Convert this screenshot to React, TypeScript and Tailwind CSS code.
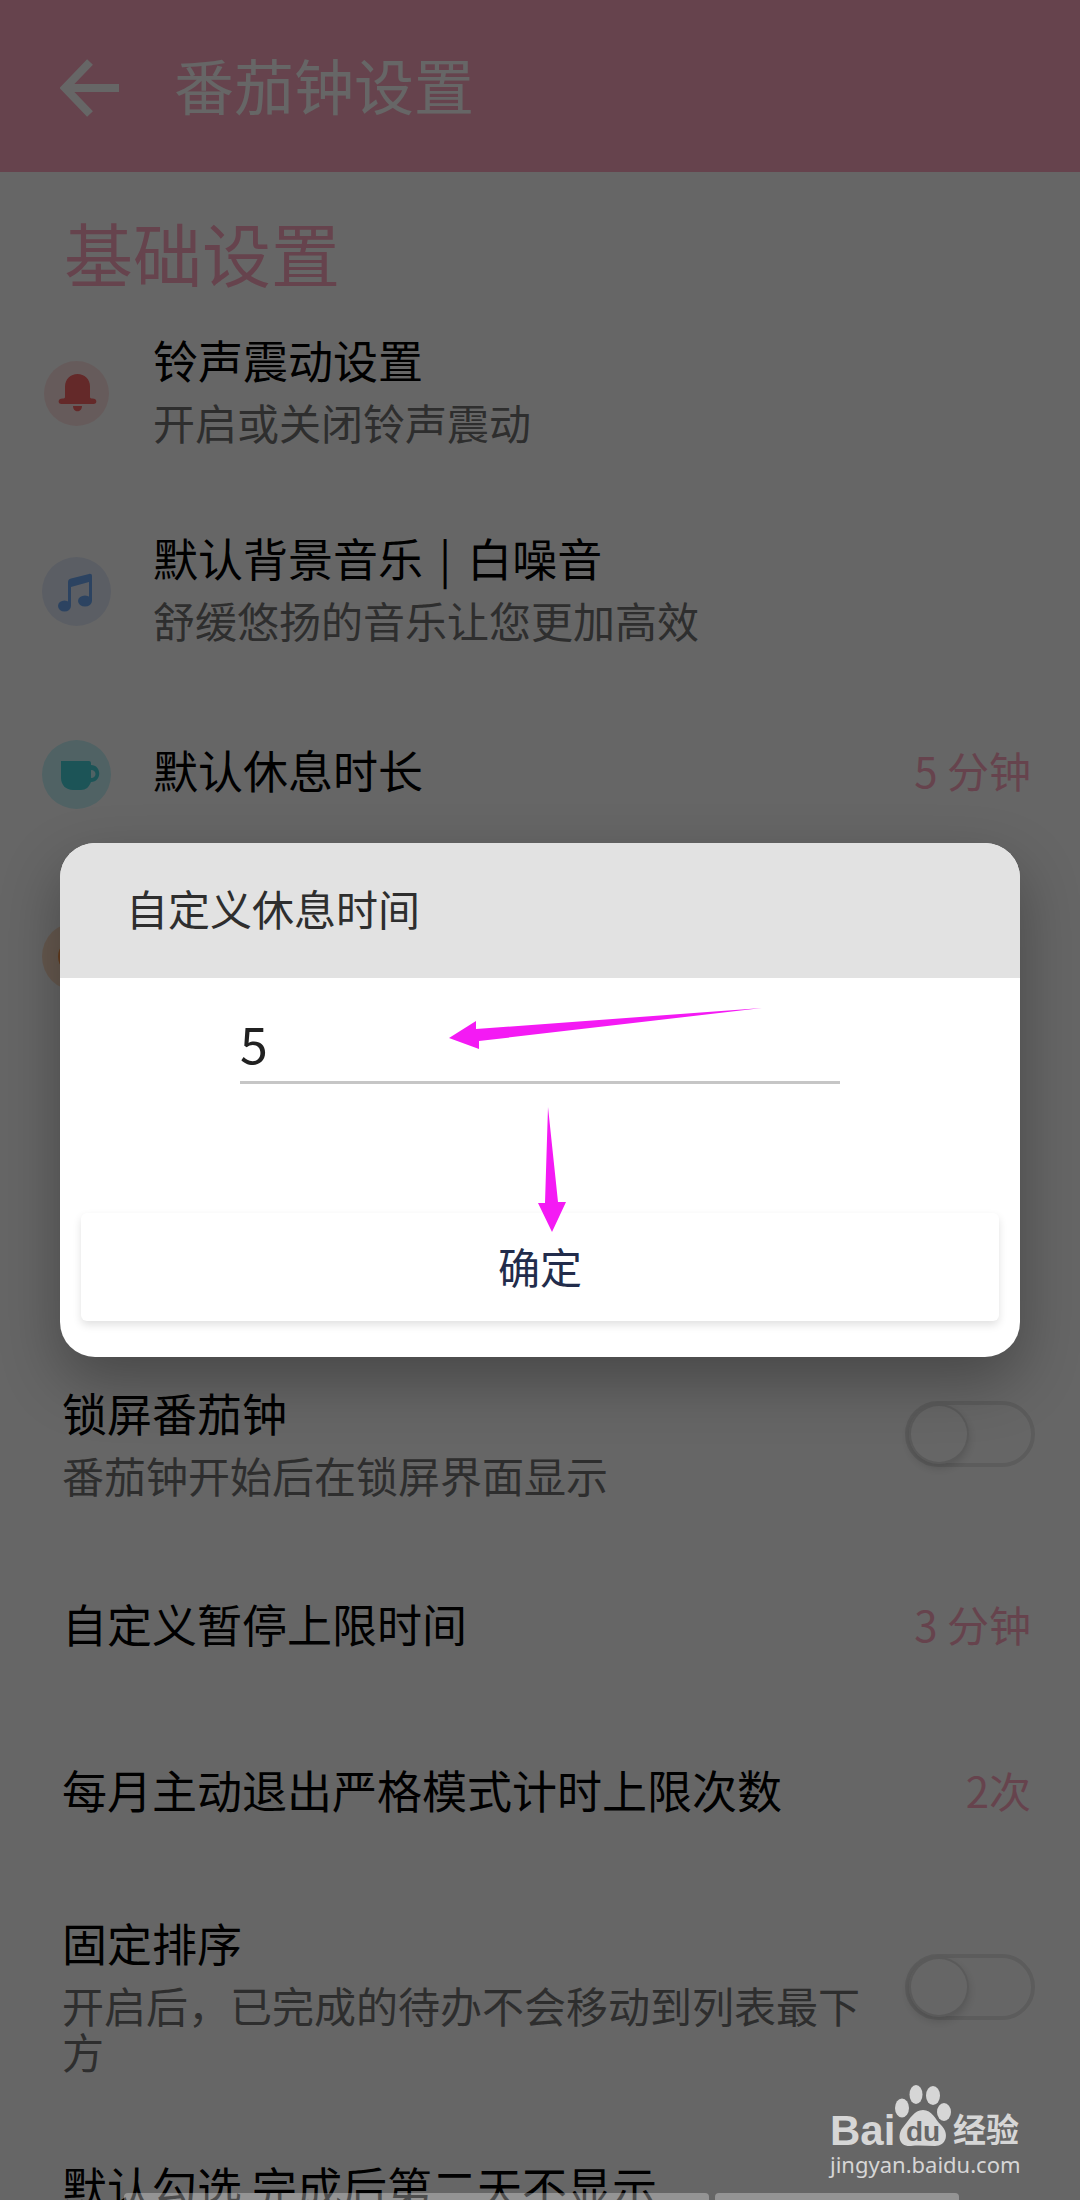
import { ReactNode, useState } from 'react'

type RowProps = {
  title?: ReactNode
  desc?: string
  icon?: ReactNode
  className?: string
  children?: ReactNode
}

const Row = ({ title, desc, icon, className = '', children }: RowProps) => (
  <li className={`flex items-center ${className}`}>
    {icon && (
      <div className="mr-[42px] mt-2 flex w-[69px] shrink-0 justify-center">
        {icon}
      </div>
    )}
    {title && (
      <div className="min-w-0 flex-1">
        <h3 className="text-[45px] leading-[54px] text-black">{title}</h3>
        {desc && (
          <p className="mt-3 text-[42px] leading-[46px] text-[#737373]">
            {desc}
          </p>
        )}
      </div>
    )}
    {children}
  </li>
)

const Toggle = ({ label }: { label: string }) => {
  const [checked, setChecked] = useState(false)

  return (
    <label className="relative mb-4 ml-10 block shrink-0">
      <input
        type="checkbox"
        role="switch"
        aria-label={label}
        checked={checked}
        onChange={(e) => setChecked(e.target.checked)}
        className="peer sr-only"
      />
      <span className="flex h-[66px] w-[130px] items-center rounded-full border-4 border-[#e6e6e6] px-[2px] peer-checked:justify-end peer-checked:bg-[#ffa8c0]">
        <span className="size-[56px] rounded-full bg-white shadow-[0_4px_10px_2px_rgba(0,0,0,0.16)] ring-2 ring-[#e2e2e2]" />
      </span>
    </label>
  )
}

const Value = ({ children }: { children: ReactNode }) => (
  <span className="ml-6 mr-1 shrink-0 text-[42px] leading-[54px] text-[#ffa8c0]">
    {children}
  </span>
)

const BellIcon = () => (
  <svg viewBox="0 0 65 65" className="size-[65px]">
    <circle cx="32.5" cy="32.5" r="32.5" fill="#ffe4e4" />
    <path
      fill="#fb6767"
      d="M33.5 13C26.500 13 21 18 21 25.500V36c0 1-1 1.500-2.500 1.500-5 0-5 5.500-1 5.500h32c4 0 4-5.500-1-5.500C47 37.500 46 37 46 36V25.500C46 18 40.500 13 33.500 13ZM29 45h9c0 7-9 7-9 0Z"
    />
  </svg>
)

const MusicIcon = () => (
  <svg viewBox="0 0 69 69" className="size-[69px]">
    <circle cx="34.5" cy="34.5" r="34.5" fill="#e4ebfa" />
    <g fill="#6ea9f2">
      <path d="M26 25c0-2 1-3 3-3.500l18-4.500c2-.5 3 .5 3 2v25h-3V25l-18 5v19h-3Z" />
      <ellipse cx="22.500" cy="49" rx="6.500" ry="5.500" />
      <ellipse cx="43" cy="44" rx="7" ry="5.500" />
    </g>
  </svg>
)

const CupIcon = () => (
  <svg viewBox="0 0 69 69" className="size-[69px]">
    <circle cx="34.5" cy="34.5" r="34.5" fill="#c8f5fa" />
    <path
      fill="#46d2da"
      d="M19 21h28q2 0 2 2v2c11 0 11 17 0 17-2 5-5 8-10 8h-8c-7 0-12-5-12-12Z"
    />
    <path fill="#c8f5fa" d="M49 30c6 0 6 8 0 8Z" />
  </svg>
)

const ClockIcon = () => (
  <svg viewBox="0 0 69 69" className="size-[69px]">
    <circle cx="34.5" cy="34.5" r="34.5" fill="#ffdfc6" />
    <circle cx="34.5" cy="34.5" r="18.5" fill="#ff9c50" />
  </svg>
)

const Watermark = () => (
  <div className="absolute bottom-6 right-[54px] flex w-[196px] flex-col text-[#d6d6d6]">
    <svg
      viewBox="0 0 196 68"
      className="h-[68px] w-[196px] overflow-visible"
      role="img"
      aria-label="Baidu 经验"
    >
      <text
        x="0"
        y="61"
        fill="currentColor"
        fontSize="42"
        fontWeight="700"
        fontFamily="Liberation Sans, sans-serif"
      >
        Bai
      </text>
      <g fill="currentColor">
        <ellipse cx="72" cy="24" rx="7" ry="9.5" />
        <ellipse cx="86" cy="10.5" rx="6.5" ry="9.5" />
        <ellipse cx="103" cy="11.5" rx="7" ry="9.5" />
        <ellipse cx="114" cy="28" rx="7" ry="9" />
        <path d="M93 26c9 0 12 9 18 15 9 9 5 21-6 21-8 0-16-1-24 0-12 1-15-11-7-20 6-7 10-16 19-16Z" />
      </g>
      <text
        x="76"
        y="57"
        fill="#666666"
        fontSize="28"
        fontWeight="700"
        fontFamily="Liberation Sans, sans-serif"
      >
        du
      </text>
      <text
        x="123"
        y="58"
        fill="currentColor"
        fontSize="33"
        fontWeight="700"
        fontFamily="Noto Sans CJK SC, sans-serif"
      >
        经验
      </text>
    </svg>
    <span className="font-['Noto_Sans',sans-serif] text-[22px] leading-[24px]">
      jingyan.baidu.com
    </span>
  </div>
)

const RestDialog = () => {
  const [minutes, setMinutes] = useState('5')

  return (
    <div className="absolute inset-0 flex items-center justify-center bg-black/60 px-[60px]">
      <form
        role="dialog"
        aria-labelledby="rest-title"
        onSubmit={(e) => e.preventDefault()}
        className="relative w-full rounded-[35px] bg-white shadow-[0_24px_60px_rgba(0,0,0,0.3)]"
      >
        <div className="h-[135px] rounded-t-[35px] bg-[#e2e2e2] px-[66px] pt-[38px]">
          <label
            id="rest-title"
            htmlFor="rest-minutes"
            className="text-[42px] leading-[54px] text-[#2e2e2e]"
          >
            自定义休息时间
          </label>
        </div>
        <div className="px-[180px] pt-8">
          <input
            id="rest-minutes"
            inputMode="numeric"
            value={minutes}
            onChange={(e) => setMinutes(e.target.value)}
            className="block h-[74px] w-full border-b-3 border-[#c6c6c6] pb-2 text-[50px] leading-[60px] text-[#212121] outline-none"
          />
        </div>
        <div className="px-[21px] pb-9 pt-[129px]">
          <button
            type="submit"
            className="h-[108px] w-full rounded-md bg-white pb-1 text-[42px] text-[#222c4b] shadow-[0_4px_8px_rgba(0,0,0,0.12)]"
          >
            确定
          </button>
        </div>
        <svg
          viewBox="0 0 320 230"
          className="pointer-events-none absolute left-[388px] top-[164px] h-[230px] w-[320px] fill-[#f41af4]"
        >
          <path d="M1 31 28 14v8L314 1 31 34v8Z" />
          <path d="m100 100 10 95h8l-14 30-14-29h7Z" />
        </svg>
      </form>
    </div>
  )
}

export default function App() {
  return (
    <div className="relative h-screen overflow-hidden bg-white font-['Noto_Sans_CJK_SC',sans-serif]">
      <header className="flex h-[172px] items-center bg-[#ffa8c0] pl-[60px]">
        <button type="button" aria-label="返回" className="mt-1 text-white">
          <svg
            viewBox="0 0 60 58"
            className="h-[58px] w-[60px]"
            fill="none"
            stroke="currentColor"
            strokeWidth="8"
          >
            <path d="M30 3 5 29l25 26M5 29h54" />
          </svg>
        </button>
        <h1 className="mb-1 ml-[54px] text-[60px] leading-[72px] text-white">
          番茄钟设置
        </h1>
      </header>

      <main className="pr-[45px]">
        <h2 className="h-[118px] pl-[64px] pt-10 text-[69px] leading-[80px] text-[#ffa8c0]">
          基础设置
        </h2>
        <ul className="pl-[42px]">
          <Row
            className="py-[43px]"
            icon={<BellIcon />}
            title="铃声震动设置"
            desc="开启或关闭铃声震动"
          />
          <Row
            className="py-[43px]"
            icon={<MusicIcon />}
            title={
              <>
                默认背景音乐 <span className="mx-[6px]">|</span> 白噪音
              </>
            }
            desc="舒缓悠扬的音乐让您更加高效"
          />
          <Row
            className="h-[168px]"
            icon={<CupIcon />}
            title="默认休息时长"
          >
            <Value>5 分钟</Value>
          </Row>
          <Row className="h-[196px]" icon={<ClockIcon />} />
        </ul>
        <ul className="mt-[293px] pl-[62px]">
          <Row
            className="py-[43px]"
            title="锁屏番茄钟"
            desc="番茄钟开始后在锁屏界面显示"
          >
            <Toggle label="锁屏番茄钟" />
          </Row>
          <Row className="py-[56px]" title="自定义暂停上限时间">
            <Value>3 分钟</Value>
          </Row>
          <Row className="py-[56px]" title="每月主动退出严格模式计时上限次数">
            <Value>2次</Value>
          </Row>
          <Row
            className="py-[43px]"
            title="固定排序"
            desc="开启后，已完成的待办不会移动到列表最下方"
          >
            <Toggle label="固定排序" />
          </Row>
          <Row className="py-[43px]" title="默认勾选 完成后第二天不显示" />
        </ul>
      </main>

      <RestDialog />

      <div className="absolute inset-x-0 bottom-0 flex h-[7px] gap-[6px] pl-[124px] pr-[121px]">
        <div className="flex-[585] rounded-t-sm bg-white/30" />
        <div className="flex-[244] rounded-t-sm bg-white/30" />
      </div>
      <Watermark />
    </div>
  )
}
